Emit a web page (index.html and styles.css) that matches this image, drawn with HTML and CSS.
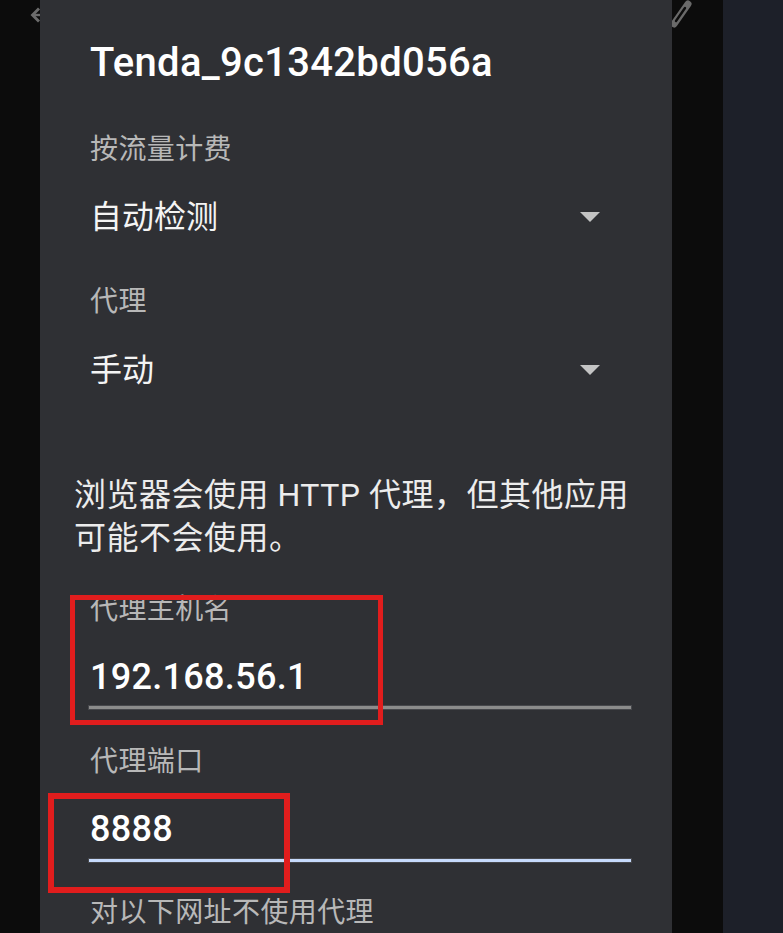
FILE: index.html
```
<!DOCTYPE html>
<html lang="zh-CN">
<head>
  <meta charset="UTF-8">
  <title>代理设置</title>
  <link rel="stylesheet" href="styles.css">
</head>
<body>
  <div class="screen">
    <div class="edge-left">
      <svg class="back-icon" width="40" height="30" viewBox="0 0 40 30">
        <path d="M30.5 15 L38 7.5 L40 9.5 L34.5 15 L40 20.5 L38 22.5 Z" fill="#6c6c6c"/>
        <rect x="34" y="13.8" width="6" height="2.4" fill="#6c6c6c"/>
      </svg>
    </div>

    <div class="dialog">
      <div class="title">Tenda_9c1342bd056a</div>

      <div class="label first">按流量计费</div>
      <div class="select">
        <span>自动检测</span>
        <span class="arrow"></span>
      </div>

      <div class="label">代理</div>
      <div class="select second">
        <span>手动</span>
        <span class="arrow"></span>
      </div>

      <p class="note">浏览器会使用 HTTP 代理，但其他应用可能不会使用。</p>

      <div class="label host">代理主机名</div>
      <div class="input">192.168.56.1</div>
      <div class="underline"></div>

      <div class="label port">代理端口</div>
      <div class="input">8888</div>
      <div class="underline focused"></div>

      <div class="label bypass">对以下网址不使用代理</div>
    </div>

    <div class="edge-gap">
      <svg width="51" height="30" viewBox="0 0 51 30">
        <path d="M2 24 L16 4" stroke="#6a6a6a" stroke-width="7" stroke-linecap="round"/>
        <path d="M4 21 L13 8" stroke="#0c0c0c" stroke-width="2.4" stroke-linecap="round"/>
      </svg>
    </div>
    <div class="edge-right"></div>

    <div class="mark mark-host"></div>
    <div class="mark mark-port"></div>
  </div>
</body>
</html>
```

FILE: styles.css
```
body {
  margin: 0;
  background: #0c0c0c;
  font-family: Roboto, "Noto Sans CJK SC", sans-serif;
}
.screen {
  position: relative;
  display: flex;
  width: 783px;
  height: 933px;
  overflow: hidden;
}
.edge-left {
  width: 40px;
  flex-shrink: 0;
  background: #0c0c0c;
}
.back-icon {
  display: block;
}
.edge-gap {
  width: 51px;
  flex-shrink: 0;
  background: #0c0c0c;
}
.edge-gap svg {
  display: block;
}
.edge-right {
  flex: 1;
  background: #1d2029;
}
.dialog {
  width: 632px;
  flex-shrink: 0;
  box-sizing: border-box;
  padding: 0 41px 0 50px;
  background: #2f3034;
  color: #f2f2f2;
}
.title {
  height: 46px;
  margin-top: 39px;
  display: flex;
  align-items: center;
  font-size: 40px;
  font-weight: 500;
  letter-spacing: 0.3px;
  color: #ffffff;
}
.label {
  height: 40px;
  display: flex;
  align-items: center;
  margin-top: 40px;
  font-size: 28px;
  line-height: 1;
  letter-spacing: 0.4px;
  color: #b8b8b8;
}
.label.first {
  margin-top: 45px;
}
.select {
  height: 50px;
  margin-top: 22px;
  padding-right: 31px;
  display: flex;
  align-items: center;
  justify-content: space-between;
  font-size: 32px;
  line-height: 1;
  color: #f4f4f4;
}
.select.second {
  margin-top: 23px;
}
.arrow {
  width: 0;
  height: 0;
  border-left: 10px solid transparent;
  border-right: 10px solid transparent;
  border-top: 10px solid #c4c4c4;
}
.note {
  margin: 79px 0 0 -16px;
  font-size: 32px;
  line-height: 43px;
  letter-spacing: 0.5px;
  color: #ececec;
}
.label.host {
  margin-top: 30px;
}
.input {
  height: 46px;
  margin-top: 24px;
  display: flex;
  align-items: center;
  font-size: 36px;
  font-weight: 500;
  letter-spacing: 0.3px;
  color: #ffffff;
}
.underline {
  height: 3px;
  margin: 6px 0 0 -1px;
  background: #8c8c8c;
  box-shadow: 0 0 0 1px #47484c;
}
.underline.focused {
  margin-top: 7px;
  background: #c6dafc;
}
.label.port {
  margin-top: 33px;
}
.label.bypass {
  margin-top: 31px;
}
.mark {
  position: absolute;
  border: 5px solid #e11d1d;
}
.mark-host {
  left: 70px;
  top: 595px;
  width: 303px;
  height: 120px;
}
.mark-port {
  left: 48px;
  top: 793px;
  width: 230px;
  height: 88px;
  border-width: 6px;
}
```
